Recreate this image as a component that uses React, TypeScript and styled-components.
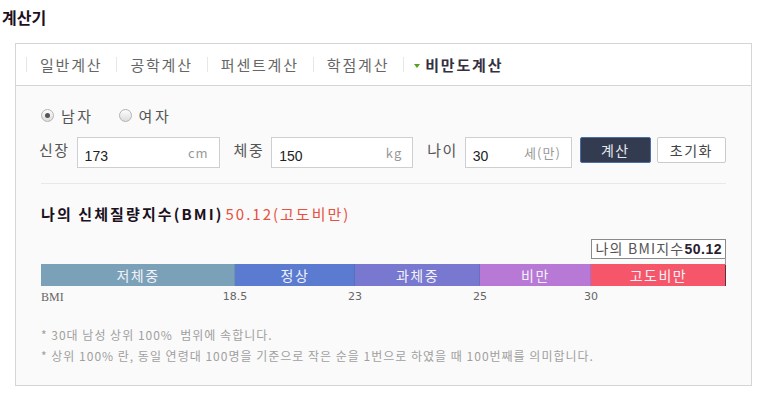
import React from 'react';
import styled, { createGlobalStyle } from 'styled-components';

const GlobalStyle = createGlobalStyle`
  body {
    margin: 0;
    background: #fff;
    font-family: "Noto Sans CJK KR", "Liberation Sans", sans-serif;
  }
`;

const TABS = ['일반계산', '공학계산', '퍼센트계산', '학점계산', '비만도계산'];

const SEGMENTS = [
  { label: '저체중', width: 194, color: '#7ba1b9', end: '18.5' },
  { label: '정상', width: 120, color: '#5a7bd0', end: '23' },
  { label: '과체중', width: 125, color: '#7878d0', end: '25' },
  { label: '비만', width: 111, color: '#b878d6', end: '30' },
  { label: '고도비만', width: 135, color: '#f5566a', end: '' },
];

const BMI = 50.12;

const App = () => {
  const markerRight = BMI >= 30 ? 0 : 50;

  return (
    <>
      <GlobalStyle />
      <Title>계산기</Title>
      <Box>
        <TabBar>
          {TABS.map((tab, i) => (
            <Tab key={tab} active={i === TABS.length - 1}>
              {i === TABS.length - 1 && <Arrow />}
              {tab}
            </Tab>
          ))}
        </TabBar>
        <Content>
          <RadioRow>
            <RadioLabel>
              <Radio checked />
              남자
            </RadioLabel>
            <RadioLabel>
              <Radio />
              여자
            </RadioLabel>
          </RadioRow>
          <InputRow>
            <Field>
              <FieldLabel>신장</FieldLabel>
              <InputBox width={143}>
                <Value>173</Value>
                <Unit>cm</Unit>
              </InputBox>
            </Field>
            <Field>
              <FieldLabel>체중</FieldLabel>
              <InputBox width={142}>
                <Value>150</Value>
                <Unit>kg</Unit>
              </InputBox>
            </Field>
            <Field>
              <FieldLabel>나이</FieldLabel>
              <InputBox width={107}>
                <Value>30</Value>
                <Unit>세(만)</Unit>
              </InputBox>
            </Field>
            <Buttons>
              <CalcButton>계산</CalcButton>
              <ResetButton>초기화</ResetButton>
            </Buttons>
          </InputRow>
          <Divider />
          <Heading>
            나의 신체질량지수(BMI)
            <Result>50.12(고도비만)</Result>
          </Heading>
          <Chart>
            <Tooltip style={{ right: markerRight }}>
              나의 BMI지수<strong>50.12</strong>
            </Tooltip>
            <Bar>
              {SEGMENTS.map((s) => (
                <Segment key={s.label} width={s.width} color={s.color}>
                  {s.label}
                </Segment>
              ))}
              <Marker />
            </Bar>
            <Scale>
              <ScaleStart>BMI</ScaleStart>
              {SEGMENTS.map((s) => (
                <ScaleCell key={s.label} width={s.width}>
                  {s.end && <Tick>{s.end}</Tick>}
                </ScaleCell>
              ))}
            </Scale>
          </Chart>
          <Notes>
            <Note>* 30대 남성 상위 100%&nbsp; 범위에 속합니다.</Note>
            <Note>* 상위 100% 란, 동일 연령대 100명을 기준으로 작은 순을 1번으로 하였을 때 100번째를 의미합니다.</Note>
          </Notes>
        </Content>
      </Box>
    </>
  );
};

export default App;

const Title = styled.h2`
  margin: 0;
  padding: 6px 0 0 2px;
  height: 37px;
  font-size: 16px;
  font-weight: 700;
  color: #1e0f1e;
  line-height: 22px;
`;

const Box = styled.div`
  margin-left: 15px;
  width: 735px;
  border: 1px solid #d5d5d5;
  background: #fafafa;
`;

const TabBar = styled.ul`
  display: flex;
  align-items: center;
  margin: 0;
  padding: 0 0 0 10px;
  height: 41px;
  list-style: none;
  background: #fff;
  border-bottom: 1px solid #d5d5d5;
`;

const Tab = styled.li<{ active?: boolean }>`
  display: flex;
  align-items: center;
  padding: 0 14px 0 13px;
  font-size: 15px;
  letter-spacing: 1.8px;
  line-height: 15px;
  border-left: 1px solid #e6e6e6;
  color: ${(p) => (p.active ? '#33303f' : '#666')};
  font-weight: ${(p) => (p.active ? 700 : 400)};
  padding-left: ${(p) => (p.active ? '10px' : '13px')};
`;

const Arrow = styled.span`
  width: 0;
  height: 0;
  margin: 2px 5px 0 0;
  border-left: 3px solid transparent;
  border-right: 3px solid transparent;
  border-top: 4px solid #55a01c;
`;

const Content = styled.div`
  padding: 19px 25px 18px;
`;

const RadioRow = styled.div`
  display: flex;
  align-items: center;
  gap: 25px;
  height: 20px;
`;

const RadioLabel = styled.label`
  display: flex;
  align-items: center;
  gap: 7px;
  font-size: 15px;
  color: #555;
  letter-spacing: 2.5px;
`;

const Radio = styled.span<{ checked?: boolean }>`
  position: relative;
  width: 11px;
  height: 11px;
  border-radius: 50%;
  border: 1px solid #b3b3b3;
  background: linear-gradient(#fdfdfd, #dcdcdc);

  &::after {
    content: '';
    display: ${(p) => (p.checked ? 'block' : 'none')};
    position: absolute;
    left: 3px;
    top: 3px;
    width: 5px;
    height: 5px;
    border-radius: 50%;
    background: #555;
  }
`;

const InputRow = styled.div`
  display: flex;
  align-items: flex-start;
  margin-top: 12px;
`;

const Field = styled.div`
  display: flex;
  align-items: flex-start;
  margin-right: 16px;
`;

const FieldLabel = styled.span`
  margin: 3px 7px 0 -2px;
  font-size: 15px;
  line-height: 20px;
  color: #555;
  letter-spacing: 1.5px;
`;

const InputBox = styled.div<{ width: number }>`
  display: flex;
  align-items: center;
  justify-content: space-between;
  box-sizing: border-box;
  width: ${(p) => p.width}px;
  height: 31px;
  padding: 2px 10px 0 7px;
  border: 1px solid #cfcfcf;
  background: #fff;
`;

const Value = styled.span`
  font-family: "Liberation Sans", Arial, sans-serif;
  font-size: 14px;
  color: #222;
  padding-top: 4px;
`;

const Unit = styled.span`
  font-size: 13px;
  color: #999;
  margin-top: -2px;
  letter-spacing: 1px;
`;

const Buttons = styled.div`
  display: flex;
  gap: 6px;
  margin-left: -8px;
`;

const CalcButton = styled.button`
  width: 71px;
  height: 26px;
  padding: 0;
  border: 1px solid #4a6ea8;
  border-radius: 2px;
  background: #333b50;
  color: #e8e8ee;
  font-family: inherit;
  font-size: 14px;
  letter-spacing: 1.5px;
`;

const ResetButton = styled.button`
  width: 69px;
  height: 26px;
  padding: 0;
  border: 1px solid #cacaca;
  border-radius: 2px;
  background: #fff;
  color: #444;
  font-family: inherit;
  font-size: 14px;
  letter-spacing: 1.5px;
`;

const Divider = styled.hr`
  margin: 15px 0 0;
  border: none;
  border-top: 1px solid #e8e8e8;
`;

const Heading = styled.h3`
  margin: 20px 0 0;
  font-size: 15px;
  line-height: 20px;
  font-weight: 700;
  letter-spacing: 2.1px;
  color: #1a1020;
`;

const Result = styled.span`
  margin-left: 2px;
  color: #e8513f;
  font-weight: 400;
  letter-spacing: 2px;
`;

const Chart = styled.div`
  position: relative;
  padding-top: 40px;
`;

const Tooltip = styled.div`
  position: absolute;
  top: 15px;
  height: 18px;
  padding: 0 3px 0 4px;
  border: 1px solid #8a8a8a;
  background: #fff;
  font-size: 14px;
  line-height: 17px;
  letter-spacing: 1.2px;
  color: #555;
  white-space: nowrap;

  & > strong {
    color: #2a2030;
    font-family: "Liberation Sans", Arial, sans-serif;
    letter-spacing: 0.5px;
  }

  &::after {
    content: '';
    position: absolute;
    right: -1px;
    top: 18px;
    width: 1px;
    height: 7px;
    background: #999;
  }
`;

const Bar = styled.div`
  display: flex;
  height: 22px;
`;

const Segment = styled.div<{ width: number; color: string }>`
  display: flex;
  justify-content: center;
  align-items: center;
  width: ${(p) => p.width}px;
  background: ${(p) => p.color};
  color: #f2f2f8;
  font-size: 14px;
  letter-spacing: 1.5px;
  box-shadow: inset -1px 0 0 rgba(0, 0, 0, 0.08);
`;

const Marker = styled.div`
  width: 1px;
  margin-left: -1px;
  background: #5a3040;
`;

const Scale = styled.div`
  position: relative;
  display: flex;
  height: 22px;
  font-family: "DejaVu Sans", Tahoma, sans-serif;
  font-size: 11px;
  line-height: 22px;
  color: #666;
`;

const ScaleStart = styled.span`
  position: absolute;
  left: 0;
  top: 0;
  font-family: "Liberation Serif", serif;
  font-size: 12px;
`;

const ScaleCell = styled.div<{ width: number }>`
  width: ${(p) => p.width}px;
  text-align: right;
`;

const Tick = styled.span`
  display: inline-block;
  transform: translateX(50%);
`;

const Notes = styled.div`
  margin-top: 17px;
`;

const Note = styled.p`
  margin: 0 0 1px;
  font-size: 12px;
  line-height: 20px;
  letter-spacing: 1px;
  color: #a0a0a0;
`;
